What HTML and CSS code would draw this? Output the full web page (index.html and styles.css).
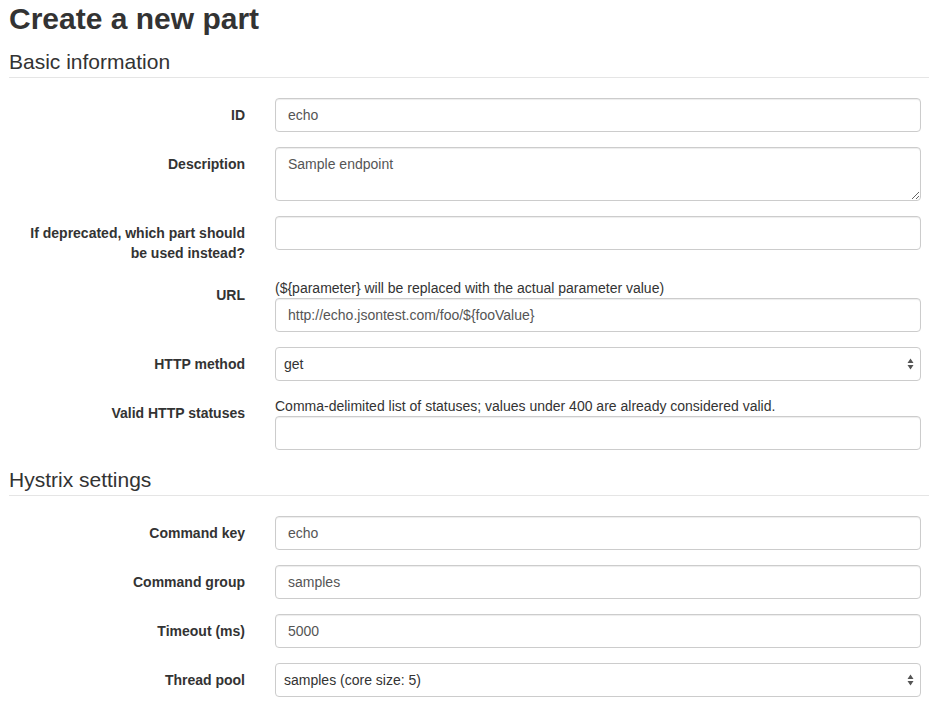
FILE: index.html
```html
<!DOCTYPE html>
<html lang="en">
<head>
<meta charset="utf-8">
<title>Create a new part</title>
<link rel="stylesheet" href="styles.css">
</head>
<body>
<div class="page">
  <h1 class="page-title">Create a new part</h1>
  <form class="part-form">
    <fieldset class="section">
      <legend class="section-title">Basic information</legend>
      <div class="form-group">
        <label class="field-label" for="id">ID</label>
        <div class="field"><input class="control" id="id" type="text" value="echo"></div>
      </div>
      <div class="form-group">
        <label class="field-label" for="desc">Description</label>
        <div class="field"><textarea class="control control-area" id="desc" rows="2">Sample endpoint</textarea></div>
      </div>
      <div class="form-group">
        <label class="field-label" for="dep">If deprecated, which part should be used instead?</label>
        <div class="field"><input class="control" id="dep" type="text" value=""></div>
      </div>
      <div class="form-group">
        <label class="field-label" for="url">URL</label>
        <div class="field">
          <p class="help">(${parameter} will be replaced with the actual parameter value)</p>
          <input class="control" id="url" type="text" value="http://echo.jsontest.com/foo/${fooValue}">
        </div>
      </div>
      <div class="form-group">
        <label class="field-label" for="method">HTTP method</label>
        <div class="field select-wrap">
          <select class="control control-select" id="method"><option>get</option></select>
          <svg class="select-arrows" width="7" height="12" viewBox="0 0 7 12"><path d="M3.5 0.5 L6.5 5 L0.5 5 Z M0.5 7 L6.5 7 L3.5 11.5 Z" fill="#555"/></svg>
        </div>
      </div>
      <div class="form-group">
        <label class="field-label" for="statuses">Valid HTTP statuses</label>
        <div class="field">
          <p class="help">Comma-delimited list of statuses; values under 400 are already considered valid.</p>
          <input class="control" id="statuses" type="text" value="">
        </div>
      </div>
    </fieldset>
    <fieldset class="section">
      <legend class="section-title">Hystrix settings</legend>
      <div class="form-group">
        <label class="field-label" for="ckey">Command key</label>
        <div class="field"><input class="control" id="ckey" type="text" value="echo"></div>
      </div>
      <div class="form-group">
        <label class="field-label" for="cgroup">Command group</label>
        <div class="field"><input class="control" id="cgroup" type="text" value="samples"></div>
      </div>
      <div class="form-group">
        <label class="field-label" for="timeout">Timeout (ms)</label>
        <div class="field"><input class="control" id="timeout" type="text" value="5000"></div>
      </div>
      <div class="form-group">
        <label class="field-label" for="pool">Thread pool</label>
        <div class="field select-wrap">
          <select class="control control-select" id="pool"><option>samples (core size: 5)</option></select>
          <svg class="select-arrows" width="7" height="12" viewBox="0 0 7 12"><path d="M3.5 0.5 L6.5 5 L0.5 5 Z M0.5 7 L6.5 7 L3.5 11.5 Z" fill="#555"/></svg>
        </div>
      </div>
    </fieldset>
  </form>
</div>
</body>
</html>
```
FILE: styles.css
```css
* { box-sizing: border-box; }

body {
  margin: 0;
  font-family: "Liberation Sans", Helvetica, Arial, sans-serif;
  font-size: 14px;
  line-height: 20px;
  color: #333;
  background: #fff;
}

.page {
  padding: 0 0 0 9px;
}

.page-title {
  font-size: 30px;
  font-weight: 700;
  line-height: 33px;
  margin: 2px 0 12px;
  color: #333;
}

.part-form { margin: 0; }

.section {
  border: 0;
  margin: 0;
  padding: 0;
  min-width: 0;
}

.section-title {
  display: block;
  width: 100%;
  padding: 0;
  margin: 0 0 20px;
  font-size: 21px;
  line-height: 30px;
  color: #333;
  border-bottom: 1px solid #e5e5e5;
}

.form-group {
  display: grid;
  grid-template-columns: 222px 646px;
  column-gap: 30px;
  margin: 0 0 15px 14px;
}

.field-label {
  text-align: right;
  font-weight: 700;
  padding-top: 7px;
}

.field { min-width: 0; }

.help {
  margin: 0;
  color: #333;
}

.control {
  display: block;
  width: 100%;
  height: 34px;
  padding: 6px 12px;
  font-family: inherit;
  font-size: 14px;
  line-height: 20px;
  color: #555;
  background: #fff;
  border: 1px solid #ccc;
  border-radius: 4px;
  box-shadow: inset 0 1px 1px rgba(0, 0, 0, .075);
  margin: 0;
}

.control-area {
  height: 54px;
  resize: vertical;
}

.select-wrap { position: relative; }

.control-select {
  -webkit-appearance: none;
  appearance: none;
  padding-left: 8px;
  color: #333;
  box-shadow: none;
}

.select-arrows {
  position: absolute;
  right: 7px;
  top: 11px;
  pointer-events: none;
}
```
